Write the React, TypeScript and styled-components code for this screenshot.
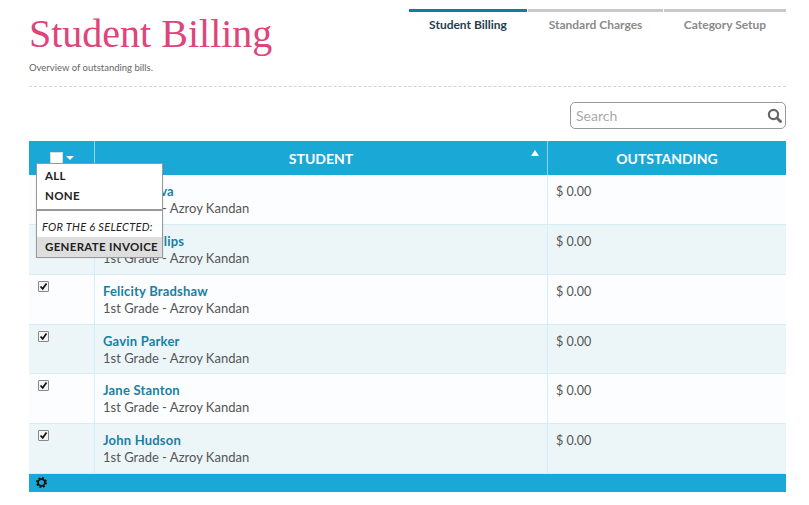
import React from "react";
import styled, { createGlobalStyle } from "styled-components";

const Global = createGlobalStyle`
  html, body { margin: 0; padding: 0; background: #fff; }
  body { font-family: Lato, "Open Sans", sans-serif; color: #444; }
`;

const Page = styled.div`
  width: 757px;
  height: 505px;
  padding-left: 29px;
  padding-right: 23px;
  overflow: hidden;
`;

const Header = styled.header`
  display: flex;
  justify-content: space-between;
  height: 87px;
  box-sizing: border-box;
  border-bottom: 1px dashed #d4d4d4;
`;

const TitleBlock = styled.div`
  padding-top: 12px;
`;

const Title = styled.h1`
  margin: 0;
  font-family: "Liberation Serif", serif;
  font-weight: 400;
  font-size: 40px;
  line-height: 44px;
  color: #e0447c;
`;

const Subtitle = styled.p`
  margin: 6px 0 0;
  font-size: 9.5px;
  line-height: 12px;
  color: #666;
`;

const Tabs = styled.nav`
  display: flex;
  gap: 1px;
  padding-top: 9px;
`;

const Tab = styled.div<{ $active?: boolean; $w: number }>`
  width: ${(p) => p.$w}px;
  height: 24px;
  border-top: 3px solid ${(p) => (p.$active ? "#0a7ea4" : "#c8c8c8")};
  text-align: center;
  font-size: 12px;
  font-weight: 700;
  line-height: 26px;
  color: ${(p) => (p.$active ? "#24404f" : "#8a8a8a")};
`;

const Toolbar = styled.div`
  display: flex;
  justify-content: flex-end;
  padding-top: 15px;
  height: 39px;
`;

const SearchBox = styled.div`
  width: 216px;
  height: 27px;
  box-sizing: border-box;
  border: 1px solid #999;
  border-radius: 5px;
  display: flex;
  align-items: center;
  justify-content: space-between;
  padding: 0 3px 0 5px;
  font-size: 14px;
  color: #aaa;
`;

const TableWrap = styled.div`
  position: relative;
`;

const Table = styled.table`
  width: 757px;
  border-collapse: collapse;
  table-layout: fixed;
  font-size: 13px;
`;

const HeadCell = styled.th<{ $w?: number }>`
  position: relative;
  width: ${(p) => (p.$w ? `${p.$w}px` : "auto")};
  height: 34px;
  padding: 0;
  background: #1aa9d6;
  color: #fff;
  font-size: 14px;
  font-weight: 700;
  text-align: center;
  border-left: 1px solid #8ed4ea;
  &:first-child { border-left: 0; }
`;

const HeadCheck = styled.div`
  display: flex;
  align-items: center;
  justify-content: center;
  gap: 3px;
`;

const WhiteBox = styled.span`
  width: 11px;
  height: 11px;
  background: #fff;
  border: 1px solid #ddd;
`;

const Caret = styled.span`
  width: 0;
  height: 0;
  border-left: 4px solid transparent;
  border-right: 4px solid transparent;
  border-top: 4px solid #fff;
`;

const SortArrow = styled.span`
  position: absolute;
  right: 8px;
  top: 9px;
  width: 0;
  height: 0;
  border-left: 4px solid transparent;
  border-right: 4px solid transparent;
  border-bottom: 6px solid #fff;
`;

const Row = styled.tr<{ $alt: boolean }>`
  height: 49.7px;
  background: ${(p) => (p.$alt ? "#ecf6f9" : "#fbfdfe")};
`;

const Cell = styled.td`
  padding: 8px 8px 0;
  vertical-align: top;
  border: 1px solid #d5edf5;
  border-top: 0;
  &:first-child { border-left: 0; }
  &:last-child { border-right: 0; }
  line-height: 17px;
`;

const CheckCell = styled(Cell)`
  padding: 6px 0 0 9px;
`;

const Check = styled.span`
  display: block;
  width: 11px;
  height: 11px;
  box-sizing: border-box;
  border: 1px solid #888;
  border-radius: 1px;
  background: #f4f4f4;
  svg { display: block; }
`;

const Name = styled.div`
  font-weight: 700;
  color: #1a7fa3;
  letter-spacing: 0.2px;
`;

const Detail = styled.div`
  color: #555;
`;

const Amount = styled.div`
  color: #555;
  font-size: 12.5px;
`;

const Footer = styled.div`
  height: 18px;
  background: #1aa9d6;
  padding-left: 7px;
  display: flex;
  align-items: center;
`;

const Menu = styled.div`
  position: absolute;
  left: 7px;
  top: 22px;
  width: 125px;
  height: 93px;
  background: #fff;
  border: 1px solid #999;
  box-shadow: 0 0 1px rgba(0,0,0,.2);
  font-size: 11.5px;
  font-weight: 700;
  color: #222;
  letter-spacing: 0.3px;
`;

const MenuItem = styled.div<{ $hover?: boolean }>`
  height: 20px;
  line-height: 20px;
  padding-left: 8px;
  background: ${(p) => (p.$hover ? "#dedede" : "transparent")};
`;

const MenuList = styled.div`
  padding-top: 2px;
  height: 43px;
  border-bottom: 2px solid #999;
`;

const MenuNote = styled.div`
  padding: 9px 0 0 5px;
  height: 17px;
  line-height: 14px;
  font-size: 11px;
  font-style: italic;
  font-weight: 400;
`;

const Check2 = () => (
  <Check>
    <svg width="9" height="9" viewBox="0 0 9 9">
      <path d="M1.5 4.5 L3.7 6.8 L7.5 1.5" fill="none" stroke="#111" strokeWidth="1.7" />
    </svg>
  </Check>
);

const Gear = () => (
  <svg width="11" height="11" viewBox="0 0 24 24">
    <circle cx="12" cy="12" r="7.5" fill="none" stroke="#111" strokeWidth="4" />
    <circle cx="12" cy="12" r="10" fill="none" stroke="#111" strokeWidth="4" strokeDasharray="4 3.85" />
  </svg>
);

const SearchIcon = () => (
  <svg width="15" height="15" viewBox="0 0 15 15">
    <circle cx="6.5" cy="6.5" r="4.6" fill="none" stroke="#666" strokeWidth="2.2" />
    <path d="M10 10 L13.5 13.5" stroke="#666" strokeWidth="2.8" strokeLinecap="round" />
  </svg>
);

const students = ["Adrian Silva", "Bruce Phillips", "Felicity Bradshaw", "Gavin Parker", "Jane Stanton", "John Hudson"];

export default function App() {
  return (
    <Page>
      <Global />
      <Header>
        <TitleBlock>
          <Title>Student Billing</Title>
          <Subtitle>Overview of outstanding bills.</Subtitle>
        </TitleBlock>
        <Tabs>
          <Tab $active $w={118}>Student Billing</Tab>
          <Tab $w={135}>Standard Charges</Tab>
          <Tab $w={122}>Category Setup</Tab>
        </Tabs>
      </Header>
      <Toolbar>
        <SearchBox>
          Search
          <SearchIcon />
        </SearchBox>
      </Toolbar>
      <TableWrap>
        <Table>
          <thead>
            <tr>
              <HeadCell $w={65}>
                <HeadCheck>
                  <WhiteBox />
                  <Caret />
                </HeadCheck>
              </HeadCell>
              <HeadCell>
                STUDENT
                <SortArrow />
              </HeadCell>
              <HeadCell $w={238}>OUTSTANDING</HeadCell>
            </tr>
          </thead>
          <tbody>
            {students.map((s, i) => (
              <Row key={s} $alt={i % 2 === 1}>
                <CheckCell><Check2 /></CheckCell>
                <Cell>
                  <Name>{s}</Name>
                  <Detail>1st Grade - Azroy Kandan</Detail>
                </Cell>
                <Cell><Amount>$ 0.00</Amount></Cell>
              </Row>
            ))}
          </tbody>
        </Table>
        <Footer><Gear /></Footer>
        <Menu>
          <MenuList>
            <MenuItem>ALL</MenuItem>
            <MenuItem>NONE</MenuItem>
          </MenuList>
          <MenuNote>FOR THE 6 SELECTED:</MenuNote>
          <MenuItem $hover>GENERATE INVOICE</MenuItem>
        </Menu>
      </TableWrap>
    </Page>
  );
}
